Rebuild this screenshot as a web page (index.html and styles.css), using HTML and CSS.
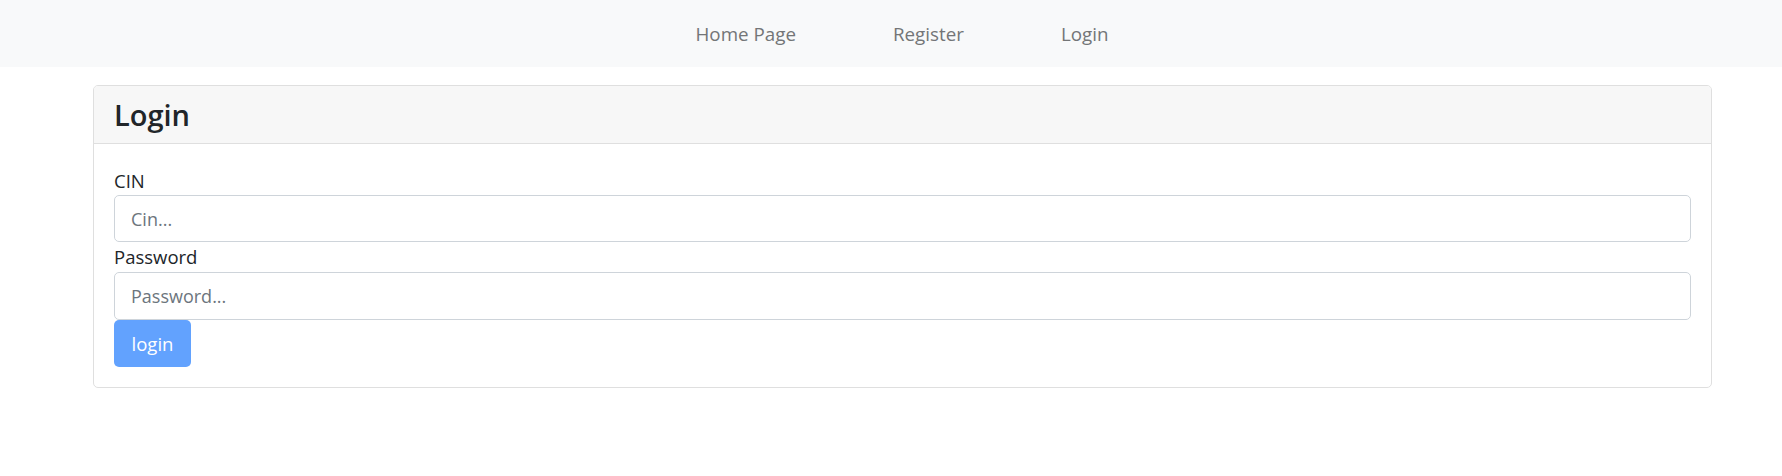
FILE: index.html
```html
<!DOCTYPE html>
<html>
<head>
<meta charset="utf-8">
<title>Login</title>
<link rel="stylesheet" href="styles.css">
</head>
<body>
<nav class="navbar">
  <ul class="nav-links">
    <li><a href="#">Home Page</a></li>
    <li><a href="#">Register</a></li>
    <li><a href="#">Login</a></li>
  </ul>
</nav>
<main class="card">
  <div class="card-header"><h3>Login</h3></div>
  <form class="card-body">
    <label for="cin">CIN</label>
    <input id="cin" type="text" placeholder="Cin...">
    <label for="pwd" class="second">Password</label>
    <input id="pwd" type="password" placeholder="Password...">
    <button type="button" class="btn">login</button>
  </form>
</main>
</body>
</html>
```
FILE: styles.css
```css
html, body {
  margin: 0;
  padding: 0;
  background: #fff;
  font-family: "Open Sans", "Noto Sans", sans-serif;
  color: #212529;
}
.navbar {
  height: 67px;
  background: #f8f9fa;
  display: flex;
  align-items: center;
  justify-content: center;
}
.nav-links {
  list-style: none;
  margin: 0 0 0 22px;
  padding: 0;
  display: flex;
  gap: 97px;
}
.nav-links a {
  text-decoration: none;
  color: #737577;
  font-size: 18.8px;
}
.card {
  margin: 18px 0 0 93px;
  width: 1619px;
  box-sizing: border-box;
  border: 1px solid #dfdfdf;
  border-radius: 5px;
  overflow: hidden;
}
.card-header {
  height: 58px;
  box-sizing: border-box;
  background: #f7f7f7;
  border-bottom: 1px solid #dfdfdf;
  display: flex;
  align-items: center;
  padding: 0 20px;
}
.card-header h3 {
  margin: 0;
  font-size: 29px;
  font-weight: 600;
  color: #212529;
}
.card-body {
  display: flex;
  flex-direction: column;
  align-items: flex-start;
  padding: 23px 20px 20px 20px;
}
label {
  display: block;
  font-size: 18.5px;
  line-height: 28px;
}
label.second {
  line-height: 30px;
}
input {
  width: 100%;
  height: 47px;
  box-sizing: border-box;
  border: 1px solid #ced4da;
  border-radius: 5px;
  padding: 0 16px;
  font-family: inherit;
  font-size: 18px;
  color: #212529;
}
#pwd {
  height: 48px;
}
input::placeholder {
  color: #6c757d;
}
.btn {
  width: 77px;
  height: 47px;
  border: none;
  border-radius: 5px;
  background: #62a2fe;
  color: #fff;
  font-family: inherit;
  font-size: 18.5px;
}
```
